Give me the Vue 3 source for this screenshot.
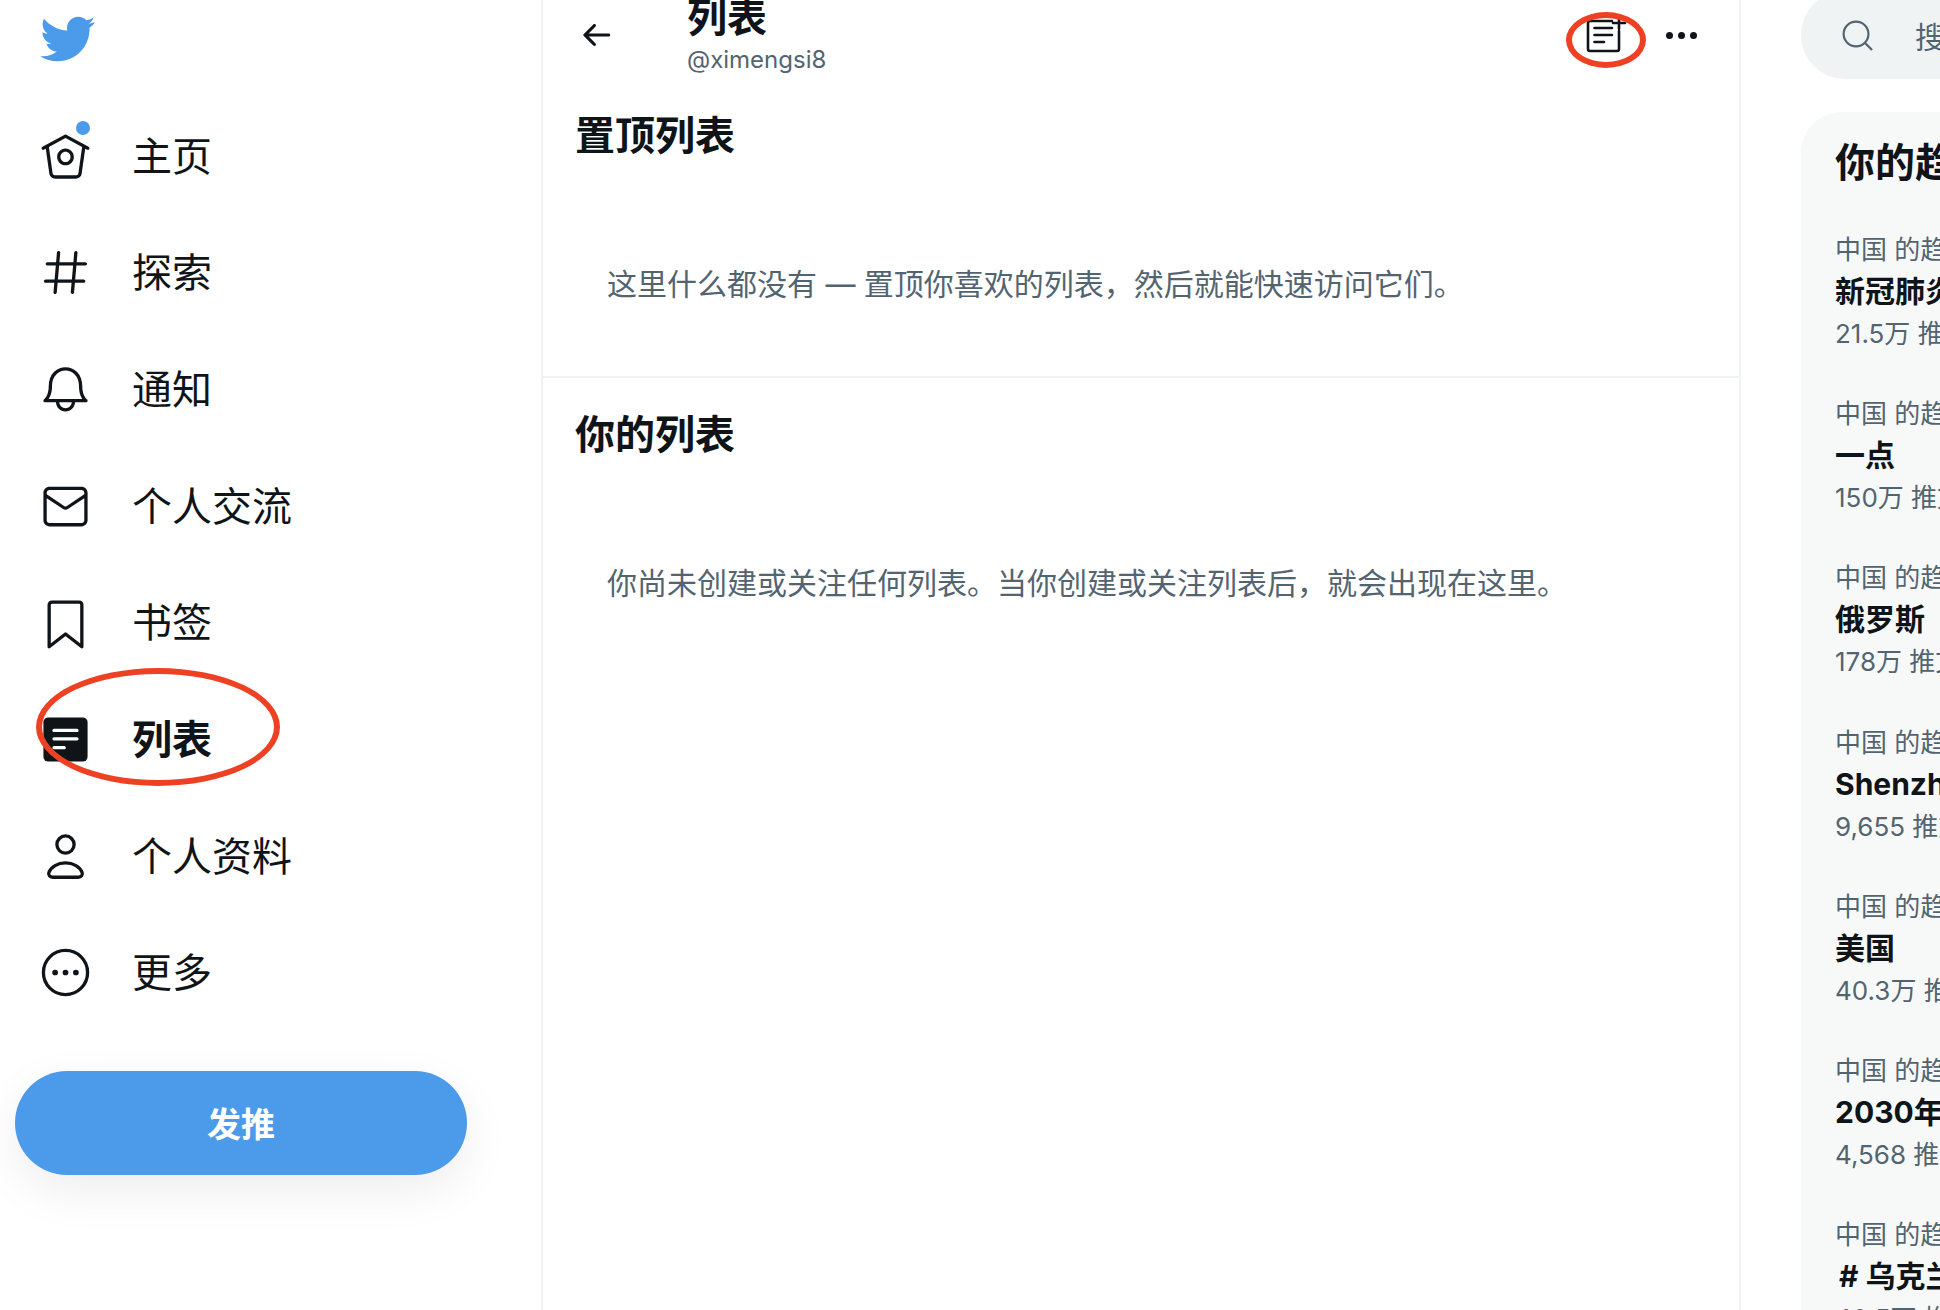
<script setup>
const nav = [
  { label: '主页', icon: 'home', dot: true },
  { label: '探索', icon: 'hash' },
  { label: '通知', icon: 'bell' },
  { label: '个人交流', icon: 'mail' },
  { label: '书签', icon: 'bookmark' },
  { label: '列表', icon: 'list', active: true },
  { label: '个人资料', icon: 'user' },
  { label: '更多', icon: 'more' }
]
const trends = [
  { title: '新冠肺炎', count: '21.5万 推文' },
  { title: '一点', count: '150万 推文' },
  { title: '俄罗斯', count: '178万 推文' },
  { title: 'Shenzhen', count: '9,655 推文' },
  { title: '美国', count: '40.3万 推文' },
  { title: '2030年', count: '4,568 推文' },
  { title: '# 乌克兰', count: '40.5万 推文', tag: true }
]
</script>

<template>
  <div class="page">
    <aside class="sidebar">
      <div class="logo">
        <svg viewBox="0 0 24 24" class="bird"><path d="M23.643 4.937c-.835.37-1.732.62-2.675.727.962-.576 1.7-1.49 2.048-2.578-.9.534-1.897.922-2.958 1.13-.85-.904-2.06-1.47-3.4-1.47-2.572 0-4.658 2.086-4.658 4.66 0 .364.042.718.12 1.06-3.873-.195-7.304-2.05-9.602-4.868-.4.69-.63 1.49-.63 2.342 0 1.616.823 3.043 2.072 3.878-.764-.025-1.482-.234-2.11-.583v.06c0 2.257 1.605 4.14 3.737 4.568-.392.106-.803.162-1.227.162-.3 0-.593-.028-.877-.082.593 1.85 2.313 3.198 4.352 3.234-1.595 1.25-3.604 1.995-5.786 1.995-.376 0-.747-.022-1.112-.065 2.062 1.323 4.51 2.093 7.14 2.093 8.57 0 13.255-7.098 13.255-13.254 0-.2-.005-.402-.014-.602.91-.658 1.7-1.477 2.323-2.41z"/></svg>
      </div>
      <nav class="nav">
        <div v-for="item in nav" :key="item.label" class="nav-item" :class="{ active: item.active }">
          <span class="nav-icon">
            <svg viewBox="0 0 24 24" class="icon">
              <template v-if="item.icon === 'home'">
                <path class="fill" d="M22.46 7.57L12.357 2.115c-.223-.12-.49-.12-.713 0L1.543 7.57c-.364.197-.5.652-.303 1.017.135.25.394.393.66.393.12 0 .243-.03.356-.09l.815-.44L4.7 19.963c.214 1.215 1.308 2.062 2.658 2.062h9.282c1.352 0 2.445-.848 2.663-2.087l1.626-11.49.818.442c.364.193.82.06 1.017-.304.196-.363.06-.818-.304-1.016zm-4.638 12.133c-.107.606-.703.822-1.18.822H7.36c-.48 0-1.075-.216-1.178-.798L4.48 7.69 12 3.628l7.522 4.06-1.7 12.015z"/>
                <path class="fill" d="M8.22 12.184c0 2.084 1.695 3.78 3.78 3.78s3.78-1.696 3.78-3.78-1.695-3.78-3.78-3.78-3.78 1.696-3.78 3.78zm6.06 0c0 1.258-1.022 2.28-2.28 2.28s-2.28-1.022-2.28-2.28 1.022-2.28 2.28-2.28 2.28 1.022 2.28 2.28z"/>
              </template>
              <path v-else-if="item.icon === 'hash'" class="fill" d="M21 7.337h-3.93l.372-4.272c.036-.412-.27-.775-.682-.812-.417-.03-.776.27-.812.683l-.383 4.4h-6.32l.37-4.27c.037-.413-.27-.776-.68-.813-.42-.03-.777.27-.813.683l-.382 4.4H3.782c-.414 0-.75.337-.75.75s.336.75.75.75H7.61l-.55 6.327H3c-.414 0-.75.336-.75.75s.336.75.75.75h3.93l-.372 4.272c-.036.412.27.775.682.812l.066.003c.385 0 .712-.295.746-.686l.383-4.4h6.32l-.37 4.27c-.036.413.27.776.682.813l.066.003c.385 0 .712-.295.746-.686l.382-4.4h3.957c.413 0 .75-.337.75-.75s-.337-.75-.75-.75H16.39l.55-6.327H21c.414 0 .75-.336.75-.75s-.336-.75-.75-.75zm-6.115 7.826h-6.32l.55-6.326h6.32l-.55 6.326z"/>
              <path v-else-if="item.icon === 'bell'" class="fill" d="M21.697 16.468c-.02-.016-2.14-1.64-2.103-6.03.02-2.532-.812-4.782-2.347-6.335C15.872 2.71 14.01 1.94 12.005 1.93h-.013c-2.004.01-3.866.78-5.242 2.174-1.534 1.553-2.368 3.802-2.346 6.334.037 4.33-2.02 5.967-2.102 6.03-.26.193-.366.53-.265.838.102.308.39.515.712.515h4.92c.102 2.31 1.997 4.16 4.33 4.16s4.226-1.85 4.327-4.16h4.922c.322 0 .61-.206.71-.514.103-.307-.003-.645-.263-.838zM12 20.478c-1.505 0-2.73-1.177-2.828-2.658h5.656c-.1 1.48-1.323 2.66-2.828 2.66zM4.38 16.32c.74-1.132 1.548-3.028 1.524-5.896-.018-2.16.644-3.982 1.913-5.267C8.91 4.05 10.397 3.437 12 3.43c1.603.008 3.087.62 4.18 1.728 1.27 1.285 1.933 3.106 1.915 5.267-.024 2.868.785 4.765 1.525 5.896H4.38z"/>
              <path v-else-if="item.icon === 'mail'" class="fill" d="M19.25 3.018H4.75C3.233 3.018 2 4.252 2 5.77v12.495c0 1.518 1.233 2.753 2.75 2.753h14.5c1.517 0 2.75-1.235 2.75-2.753V5.77c0-1.518-1.233-2.752-2.75-2.752zm-14.5 1.5h14.5c.69 0 1.25.56 1.25 1.25v.714l-8.05 5.367c-.273.18-.626.182-.9-.002L3.5 6.482v-.714c0-.69.56-1.25 1.25-1.25zm14.5 14.998H4.75c-.69 0-1.25-.56-1.25-1.25V8.24l7.24 4.83c.383.256.822.384 1.26.384.44 0 .877-.128 1.26-.383l7.24-4.83v10.022c0 .69-.56 1.25-1.25 1.25z"/>
              <path v-else-if="item.icon === 'bookmark'" class="line" d="M4.6 23V4.100c0-.8.5-1.300 1.300-1.300h12.200c.8 0 1.300.5 1.300 1.300V23L12 17.200z"/>
              <template v-else-if="item.icon === 'list'">
                <rect x="2" y="2" width="20" height="20" rx="2.2" class="fill"/>
                <path class="white" d="M6.800 7.900h10.400M6.800 11.700h10.400M6.800 15.700h4.600"/>
              </template>
              <template v-else-if="item.icon === 'user'">
                <circle cx="12" cy="6.600" r="3.900" class="line"/>
                <path class="line" d="M6.200 21.400h11.600c1.300 0 2.200-1 1.700-2.200-1-2.500-3.900-4.300-7.500-4.300s-6.500 1.800-7.500 4.300c-.5 1.200.4 2.200 1.700 2.200z"/>
              </template>
              <template v-else-if="item.icon === 'more'">
                <circle cx="12" cy="12" r="10" class="line"/>
                <circle cx="7.300" cy="12" r="1.300" class="fill"/>
                <circle cx="12" cy="12" r="1.300" class="fill"/>
                <circle cx="16.700" cy="12" r="1.300" class="fill"/>
              </template>
            </svg>
            <span v-if="item.dot" class="dot"></span>
          </span>
          <span class="nav-label">{{ item.label }}</span>
          <span v-if="item.active" class="ring"></span>
        </div>
      </nav>
      <button class="tweet">发推</button>
    </aside>

    <main class="main">
      <header class="header">
        <svg viewBox="0 0 24 24" class="back"><path class="fill" d="M20 11H7.414l4.293-4.293c.39-.39.39-1.023 0-1.414s-1.023-.39-1.414 0l-6 6c-.39.39-.39 1.023 0 1.414l6 6c.195.195.45.293.707.293s.512-.098.707-.293c.39-.39.39-1.023 0-1.414L7.414 13H20c.553 0 1-.447 1-1s-.447-1-1-1z"/></svg>
        <div class="title-block">
          <div class="title">列表</div>
          <div class="handle">@ximengsi8</div>
        </div>
        <div class="actions">
          <span class="add-wrap">
            <svg viewBox="0 0 44 40" class="add">
              <path class="line-thin" d="M27 6H5c-1.100 0-2 .9-2 2v26c0 1.100.9 2 2 2h27c1.100 0 2-.9 2-2V16"/>
              <path class="line-thin" d="M9.500 13h17.500M9.500 20h17.500M9.500 27h9.500"/>
              <path class="line-thin" d="M34 2v12M28 8h12"/>
            </svg>
            <span class="ring-small"></span>
          </span>
          <span class="dots"><i></i><i></i><i></i></span>
        </div>
      </header>
      <section class="pinned">
        <h2 class="section-title">置顶列表</h2>
        <p class="empty">这里什么都没有 — 置顶你喜欢的列表，然后就能快速访问它们。</p>
      </section>
      <section class="yours">
        <h2 class="section-title">你的列表</h2>
        <p class="empty">你尚未创建或关注任何列表。当你创建或关注列表后，就会出现在这里。</p>
      </section>
    </main>

    <aside class="right">
      <div class="search">
        <svg viewBox="0 0 24 24" class="search-icon"><circle cx="11" cy="11" r="8.500"/><path d="M17.200 17.200l4.800 4.800"/></svg>
        <span>搜索 Twitter</span>
      </div>
      <div class="card">
        <h2 class="card-title">你的趋势</h2>
        <div class="trends">
          <div v-for="t in trends" :key="t.title" class="trend">
            <div class="muted">中国 的趋势</div>
            <div class="trend-title" :class="{ tag: t.tag }">{{ t.title }}</div>
            <div class="muted">{{ t.count }}</div>
          </div>
        </div>
      </div>
    </aside>
  </div>
</template>

<style scoped>
.page {
  display: flex;
  width: 1940px;
  height: 1310px;
  overflow: hidden;
  background: #fff;
  color: #0f1419;
  font-family: Inter, "Noto Sans CJK SC", sans-serif;
}
.fill { fill: #0f1419; }
.line { fill: none; stroke: #0f1419; stroke-width: 1.5; stroke-linejoin: round; }
.white { fill: none; stroke: #fff; stroke-width: 1.5; stroke-linecap: round; }
.line-thin { fill: none; stroke: #0f1419; stroke-width: 2.6; stroke-linecap: round; stroke-linejoin: round; }

.sidebar {
  width: 526px;
  flex: none;
  padding: 10px 0 0 15px;
  border-right: 2px solid #eff3f4;
}
.logo { height: 87px; padding-left: 23px; }
.bird { width: 58px; height: 58px; fill: #4c9aea; display: block; }
.nav { padding-left: 24px; }
.nav-item {
  position: relative;
  display: flex;
  align-items: center;
  gap: 40px;
  height: 116.67px;
  font-size: 40px;
}
.nav-label { padding-bottom: 3px; }
.nav-item.active .nav-label { font-weight: 700; }
.nav-icon { position: relative; width: 53px; height: 53px; flex: none; margin-top: 2px; }
.icon { width: 53px; height: 53px; display: block; }
.dot {
  position: absolute;
  top: -9px;
  right: 2px;
  width: 14px;
  height: 14px;
  border-radius: 50%;
  background: #4c9aea;
}
.ring {
  position: absolute;
  left: -3px;
  top: -12px;
  width: 244px;
  height: 118px;
  box-sizing: border-box;
  border: 6px solid #ee4123;
  border-radius: 50%;
}
.tweet {
  display: block;
  width: 452px;
  height: 104px;
  margin-top: 41px;
  padding-bottom: 3px;
  border: 0;
  border-radius: 52px;
  background: #4c9aea;
  color: #fff;
  font: 700 34px Inter, "Noto Sans CJK SC", sans-serif;
  box-shadow: 0 16px 48px rgba(0, 0, 0, 0.07);
}

.main {
  width: 1196px;
  flex: none;
  border-right: 2px solid #eff3f4;
}
.header {
  display: flex;
  align-items: flex-start;
  height: 94px;
  padding-left: 34px;
  padding-right: 42px;
  box-sizing: border-box;
}
.back { width: 38px; height: 38px; margin-top: 16px; flex: none; }
.title-block { margin-left: 72px; margin-top: -6px; }
.title { font-size: 40px; font-weight: 700; line-height: 48px; }
.handle { font-size: 24px; line-height: 36px; color: #536471; }
.actions { margin-left: auto; display: flex; align-items: center; gap: 37px; height: 70px; }
.add-wrap { position: relative; width: 44px; height: 40px; }
.add { width: 44px; height: 40px; display: block; }
.ring-small {
  position: absolute;
  left: -19px;
  top: -3px;
  width: 80px;
  height: 56px;
  box-sizing: border-box;
  border: 6px solid #ee4123;
  border-radius: 50%;
}
.dots { display: flex; gap: 5px; }
.dots i { width: 7px; height: 7px; border-radius: 50%; background: #0f1419; display: block; }
.pinned {
  height: 284px;
  box-sizing: border-box;
  border-bottom: 2px solid #eff3f4;
  padding: 18px 32px 0;
}
.yours { padding: 33px 32px 0; }
.section-title { margin: 0; font-size: 40px; font-weight: 700; line-height: 48px; }
.empty {
  margin: 0;
  padding: 103px 0 0 32px;
  font-size: 30px;
  line-height: 42px;
  color: #536471;
  white-space: nowrap;
}
.yours .empty { padding-top: 103px; }

.right { margin-left: 60px; width: 500px; flex: none; }
.search {
  display: flex;
  align-items: center;
  gap: 40px;
  height: 88px;
  margin-top: -9px;
  padding-left: 39px;
  border-radius: 44px;
  background: #eff3f4;
  font-size: 30px;
  color: #536471;
}
.search-icon { width: 35px; height: 35px; fill: none; stroke: #536471; stroke-width: 1.5; flex: none; }
.card {
  margin-top: 33px;
  padding: 25px 34px;
  border-radius: 40px;
  background: #f7f9f9;
  min-height: 1300px;
}
.card-title { margin: 0 0 40px; font-size: 40px; font-weight: 700; line-height: 52px; }
.trends { display: flex; flex-direction: column; gap: 38.2px; }
.trend { height: 126px; white-space: nowrap; }
.muted { font-size: 26px; line-height: 42px; color: #536471; }
.trend-title { font-size: 30px; font-weight: 700; line-height: 40px; margin-bottom: 2px; }
.trend-title.tag { padding-left: 4px; }
</style>
